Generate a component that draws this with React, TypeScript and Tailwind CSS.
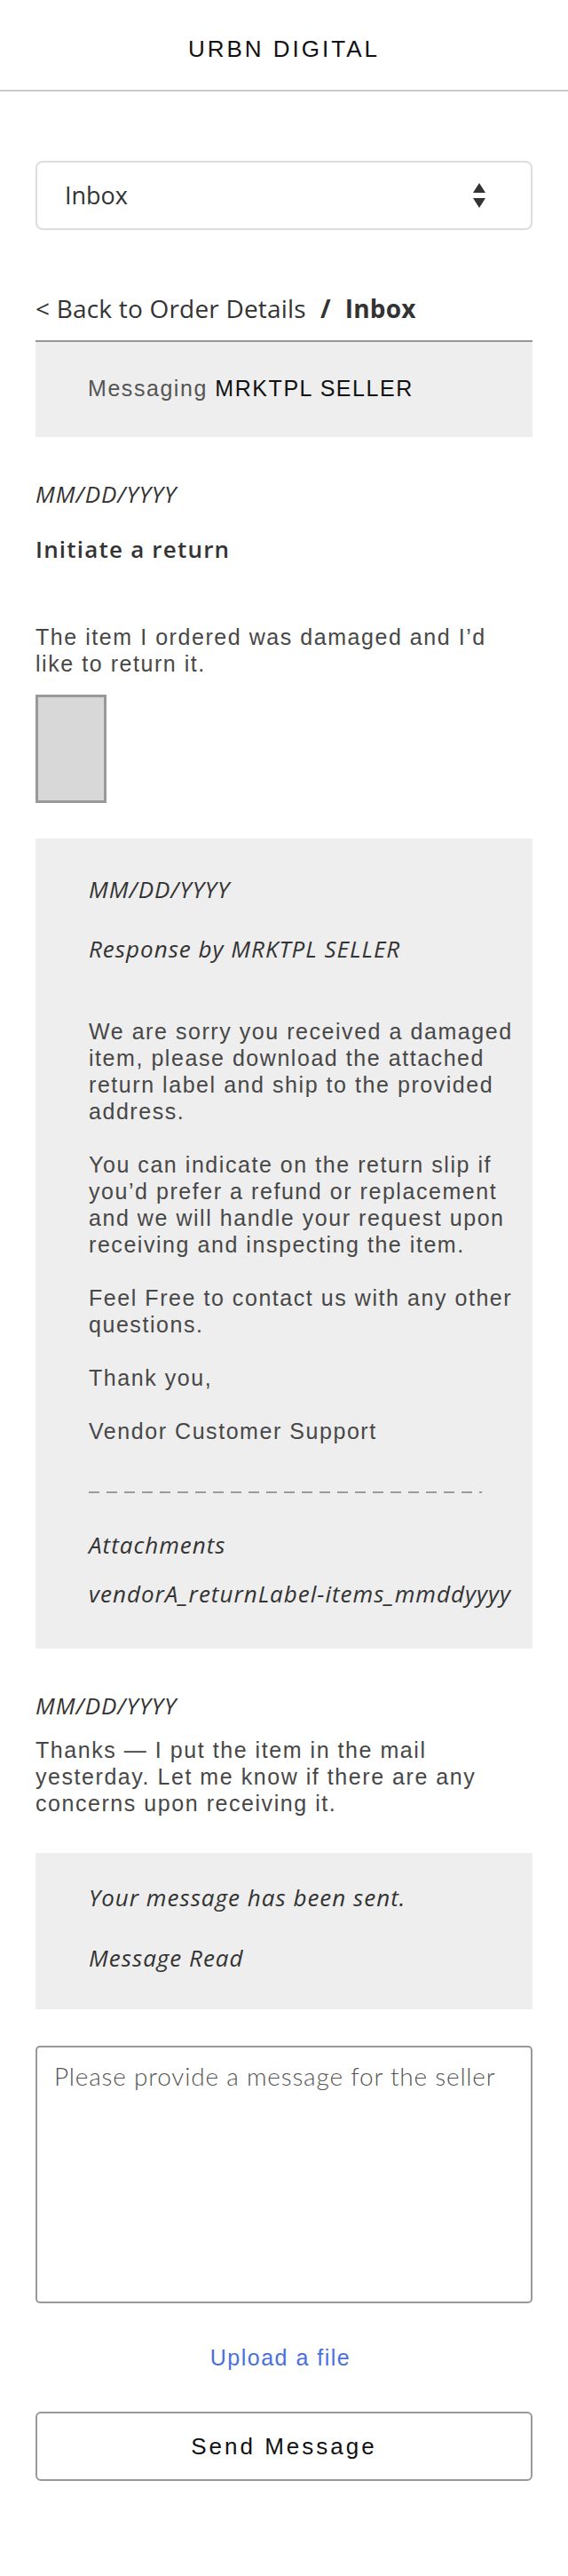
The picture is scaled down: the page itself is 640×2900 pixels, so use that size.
const sans = "font-['Liberation_Sans',Arial,sans-serif]";
const open = "font-['Open_Sans',sans-serif]";

function Lines({ lines }: { lines: string[] }) {
  return (
    <>
      {lines.map((l, i) => (
        <span key={i} className="block whitespace-nowrap">
          {l}
        </span>
      ))}
    </>
  );
}

function SelectArrows() {
  return (
    <svg width="14" height="28" viewBox="0 0 14 28" className="fill-[#333]">
      <polygon points="7,0 14,11 0,11" />
      <polygon points="0,17 14,17 7,28" />
    </svg>
  );
}

export default function App() {
  const body = `${sans} text-[25px] leading-[30px] tracking-[1.55px] text-[#474747]`;
  const italic = `${open} italic text-[26px] leading-[30px] tracking-[1px] text-[#333]`;

  return (
    <div className="min-h-[2900px] bg-white">
      {/* header */}
      <header className="h-[103px] border-b-2 border-[#ccc] pt-[40px] text-center">
        <h1 className={`${sans} text-[26px] leading-[30px] tracking-[3px] text-[#111]`}>URBN DIGITAL</h1>
      </header>

      <main className="px-[40px]">
        {/* mailbox select */}
        <div className="mt-[78px] flex h-[78px] items-center justify-between rounded-[8px] border-2 border-[#ddd] pl-[31px] pr-[51px]">
          <span className={`${open} text-[27px] leading-[30px] text-[#333]`}>Inbox</span>
          <SelectArrows />
        </div>

        {/* breadcrumb */}
        <nav className={`${open} mt-[73px] text-[28px] leading-[30px] tracking-[0.2px] text-[#333]`}>
          <span>&lt; Back to Order Details</span>
          <span className="ml-[16px] font-bold">/</span>
          <span className="ml-[16px] font-bold">Inbox</span>
        </nav>

        <div className="mt-[21px] border-t-2 border-[#999] bg-[#eee] pb-[40px] pl-[59px] pt-[37px]">
          <p className={`${sans} text-[25px] leading-[30px] tracking-[1.55px] text-[#555]`}>
            Messaging <span className="text-[#111]">MRKTPL SELLER</span>
          </p>
        </div>

        {/* customer message */}
        <p className={`${italic} mt-[49px]`}>MM/DD/YYYY</p>
        <h2 className={`${open} mt-[32px] text-[26px] font-semibold leading-[30px] tracking-[1.2px] text-[#333]`}>
          Initiate a return
        </h2>
        <p className={`${body} mt-[69px]`}>
          <Lines lines={["The item I ordered was damaged and I’d", "like to return it."]} />
        </p>
        <div className="mt-[20px] h-[122px] w-[80px] border-[3px] border-[#999] bg-[#d8d8d8]" />

        {/* seller response */}
        <div className="mt-[40px] bg-[#eee] pb-[47px] pl-[60px] pr-[10px] pt-[42px]">
          <p className={italic}>MM/DD/YYYY</p>
          <p className={`${italic} mt-[37px]`}>Response by MRKTPL SELLER</p>
          <p className={`${body} mt-[63px]`}>
            <Lines
              lines={[
                "We are sorry you received a damaged",
                "item, please download the attached",
                "return label and ship to the provided",
                "address.",
              ]}
            />
          </p>
          <p className={`${body} mt-[30px]`}>
            <Lines
              lines={[
                "You can indicate on the return slip if",
                "you’d prefer a refund or replacement",
                "and we will handle your request upon",
                "receiving and inspecting the item.",
              ]}
            />
          </p>
          <p className={`${body} mt-[30px]`}>
            <Lines lines={["Feel Free to contact us with any other", "questions."]} />
          </p>
          <p className={`${body} mt-[30px]`}>Thank you,</p>
          <p className={`${body} mt-[30px]`}>Vendor Customer Support</p>
          <div className="mt-[53px] h-[2px] w-[443px] bg-[repeating-linear-gradient(90deg,#9a9a9a_0_12px,transparent_12px_20px)]" />
          <p className={`${italic} mt-[43px]`}>Attachments</p>
          <p className={`${italic} mt-[25px] whitespace-nowrap`}>vendorA_returnLabel-items_mmddyyyy</p>
        </div>

        {/* customer reply */}
        <p className={`${italic} mt-[49px]`}>MM/DD/YYYY</p>
        <p className={`${body} mt-[20px]`}>
          <Lines
            lines={[
              "Thanks — I put the item in the mail",
              "yesterday. Let me know if there are any",
              "concerns upon receiving it.",
            ]}
          />
        </p>

        <div className="mt-[41px] bg-[#eee] pb-[43px] pl-[60px] pt-[35px]">
          <p className={italic}>Your message has been sent.</p>
          <p className={`${italic} mt-[38px]`}>Message Read</p>
        </div>

        {/* compose */}
        <textarea
          placeholder="Please provide a message for the seller"
          className="mt-[41px] block h-[290px] w-full resize-none rounded-[5px] border-2 border-[#999] pl-[19px] pt-[17px] font-['Lato',sans-serif] text-[28px] font-light leading-[30px] tracking-[0.8px] text-[#333] outline-none placeholder:text-[#555]"
        />

        <div className="mt-[46px] pr-[8px] text-center">
          <a href="#" className={`${sans} text-[25px] leading-[30px] tracking-[1.5px] text-[#4a6fe0]`}>
            Upload a file
          </a>
        </div>

        <button
          type="button"
          className={`${sans} mt-[46px] flex h-[78px] w-full items-center justify-center rounded-[6px] border-2 border-[#999] bg-white text-[26px] leading-[30px] tracking-[3px] text-[#111]`}
        >
          Send Message
        </button>
      </main>
    </div>
  );
}
